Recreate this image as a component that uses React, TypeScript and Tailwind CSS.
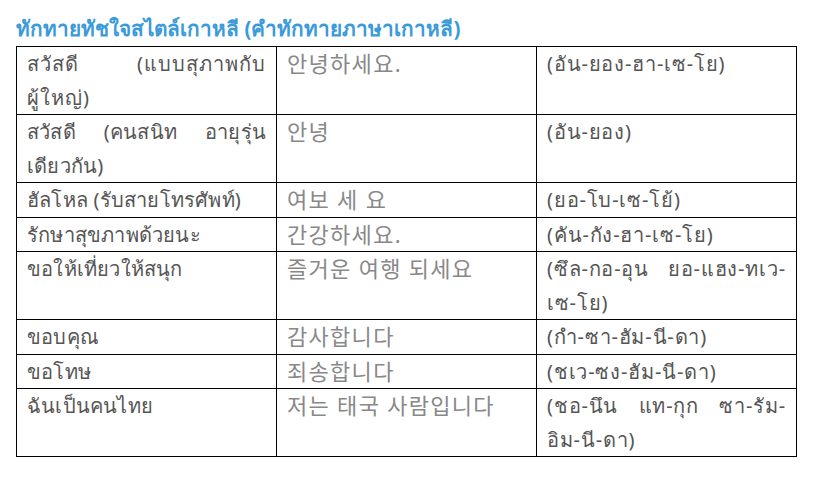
import React from 'react';

const rows: [string, string, string][] = [
  ['สวัสดี (แบบสุภาพกับผู้ใหญ่)', '안녕하세요.', '(อัน-ยอง-ฮา-เซ-โย)'],
  ['สวัสดี (คนสนิท อายุรุ่นเดียวกัน)', '안녕', '(อัน-ยอง)'],
  ['ฮัลโหล (รับสายโทรศัพท์)', '여보 세 요', '(ยอ-โบ-เซ-โย้)'],
  ['รักษาสุขภาพด้วยนะ', '간강하세요.', '(คัน-กัง-ฮา-เซ-โย)'],
  ['ขอให้เที่ยวให้สนุก', '즐거운 여행 되세요', '(ซึล-กอ-อุน ยอ-แฮง-ทเว-เซ-โย)'],
  ['ขอบคุณ', '감사합니다', '(กำ-ซา-ฮัม-นี-ดา)'],
  ['ขอโทษ', '죄송합니다', '(ชเว-ซง-ฮัม-นี-ดา)'],
  ['ฉันเป็นคนไทย', '저는 태국 사람입니다', '(ชอ-นึน แท-กุก ซา-รัม-อิม-นี-ดา)'],
];

export default function App() {
  return (
    <div
      className="w-[815px] h-[477px] bg-white pl-4 pt-[13px]"
      style={{ fontFamily: '"Noto Sans", "Noto Sans CJK KR", sans-serif' }}
    >
      <h2 className="text-[20.7px] leading-[30px] font-bold text-[#3b9ad9] mb-[3px]">
        ทักทายทัชใจสไตล์เกาหลี (คำทักทายภาษาเกาหลี)
      </h2>
      <table className="w-[780px] border-collapse table-fixed">
        <tbody>
          {rows.map(([th, ko, ro], i) => (
            <tr key={i}>
              <td
                className={`border border-black align-top px-[10px] text-[20px] leading-[33.5px] text-[#555] text-justify w-[260px] ${
                  i === 0 ? 'tracking-[1px]' : 'tracking-[0.2px]'
                }`}
              >
                {th}
              </td>
              <td className="border border-black align-top px-[10px] text-[22px] leading-[33.5px] tracking-[1.3px] text-[#888] w-[260px]">
                {ko}
              </td>
              <td className="border border-black align-top px-[10px] text-[20px] leading-[33.5px] tracking-[0.8px] text-[#555] text-justify w-[260px]">
                {ro}
              </td>
            </tr>
          ))}
        </tbody>
      </table>
    </div>
  );
}
